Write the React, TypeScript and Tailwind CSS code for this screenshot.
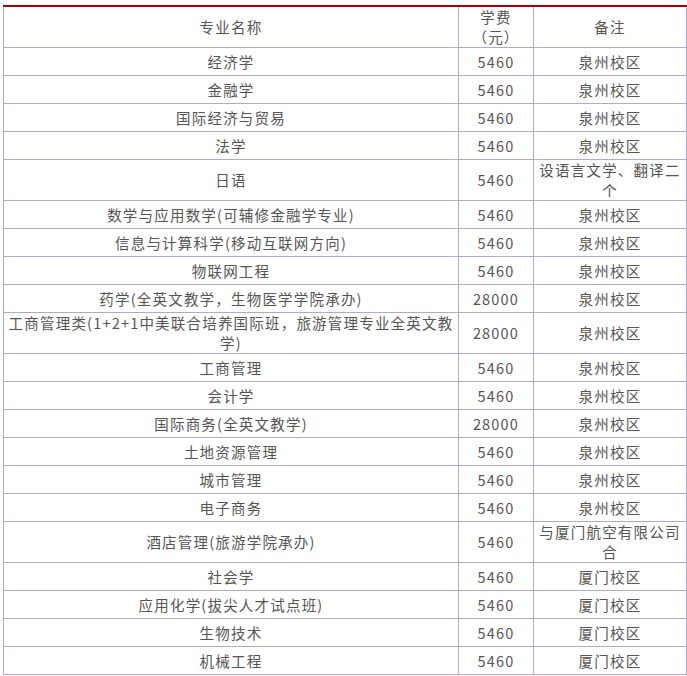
const rows: [string, string, string][] = [
  ["经济学", "5460", "泉州校区"],
  ["金融学", "5460", "泉州校区"],
  ["国际经济与贸易", "5460", "泉州校区"],
  ["法学", "5460", "泉州校区"],
  ["日语", "5460", "设语言文学、翻译二个"],
  ["数学与应用数学(可辅修金融学专业)", "5460", "泉州校区"],
  ["信息与计算科学(移动互联网方向)", "5460", "泉州校区"],
  ["物联网工程", "5460", "泉州校区"],
  ["药学(全英文教学，生物医学学院承办)", "28000", "泉州校区"],
  ["工商管理类(1+2+1中美联合培养国际班，旅游管理专业全英文教学)", "28000", "泉州校区"],
  ["工商管理", "5460", "泉州校区"],
  ["会计学", "5460", "泉州校区"],
  ["国际商务(全英文教学)", "28000", "泉州校区"],
  ["土地资源管理", "5460", "泉州校区"],
  ["城市管理", "5460", "泉州校区"],
  ["电子商务", "5460", "泉州校区"],
  ["酒店管理(旅游学院承办)", "5460", "与厦门航空有限公司合"],
  ["社会学", "5460", "厦门校区"],
  ["应用化学(拔尖人才试点班)", "5460", "厦门校区"],
  ["生物技术", "5460", "厦门校区"],
  ["机械工程", "5460", "厦门校区"],
];

export default function App() {
  const td = "border border-[#b4a7d6] text-center align-middle px-[2px] py-0 leading-[20px]";
  return (
    <div className="bg-white w-[687px] h-[676px] pt-[5px] pl-[3px] text-[14.5px] tracking-[1.2px] text-[#555]" style={{ fontFamily: '"Noto Sans CJK SC", sans-serif' }}>
      <table className="border-collapse w-[683px] table-fixed border-t-2 border-t-[#a00]">
        <colgroup>
          <col className="w-[455px]" />
          <col className="w-[75px]" />
          <col className="w-[153px]" />
        </colgroup>
        <tbody>
          <tr className="h-[41px]">
            <td className={td + " border-t-[#a00]"}>专业名称</td>
            <td className={td + " border-t-[#a00]"}>学费<br />（元）</td>
            <td className={td + " border-t-[#a00]"}>备注</td>
          </tr>
          {rows.map((r, i) => (
            <tr key={i} className="h-[28px]">
              <td className={td}>{r[0]}</td>
              <td className={td}>{r[1]}</td>
              <td className={td}>{r[2]}</td>
            </tr>
          ))}
        </tbody>
      </table>
    </div>
  );
}
